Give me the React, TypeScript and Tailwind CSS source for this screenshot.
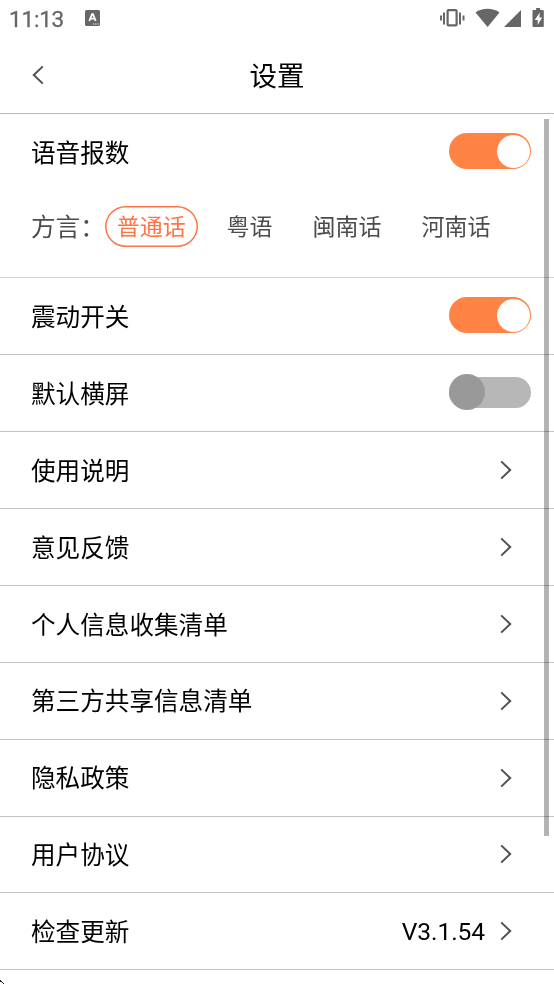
const rows = [
    "使用说明",
    "意见反馈",
    "个人信息收集清单",
    "第三方共享信息清单",
    "隐私政策",
    "用户协议",
]

const dialects = [
    { name: "粤语", className: "ml-[28.5px]" },
    { name: "闽南话", className: "ml-[40px]" },
    { name: "河南话", className: "ml-[40px]" },
]

function StatusBar () {
    return (
        <div className="flex h-[38px] items-center pb-[2px] text-[#666666]">
            <span className="ml-[9px] w-[76px] pt-[3px] font-[Roboto] text-[22.5px] leading-none tracking-[-0.2px] [-webkit-text-stroke:0.3px_#666666]">11:13</span>
            <svg width="15" height="16" viewBox="0 0 15 16">
                <rect width="15" height="16" rx="1.5" fill="#666666" />
                <path d="M4.3 11 7 4.2h1L10.7 11M5.4 8.7h4.2" fill="none" stroke="#fff" strokeWidth="1.8" />
                <path d="M8 14h1.2M10.2 14h1.2M12.4 14h1.2" stroke="#fff" strokeWidth="1" />
            </svg>
            <svg width="106" height="22" viewBox="0 0 106 22" className="ml-auto mr-[9.5px]" fill="#666666">
                <path d="M1 8.5h2v5H1zM4 5.5h2v12H4zM20 5.5h2v12h-2zM23.5 8.5h2v5h-2z" />
                <rect x="8.6" y="3.1" width="9" height="15.3" rx="1" fill="none" stroke="#666666" strokeWidth="2.2" />
                <path d="M36.5 5.4C43 .4 54 .4 60.5 5.4L48.6 20z" />
                <path d="M65 20 82 3v17z" />
                <path d="M94.5 3h2.6V1h4V3h2.7q1 0 1 1v15q0 1-1 1h-9.3q-1 0-1-1V4q0-1 1-1z" />
                <path d="M100.8 5.5 95.7 13h3v5l4.4-7.5h-2.7z" fill="#fff" />
            </svg>
        </div>
    )
}

function Switch ({ on }: { on: boolean }) {
    if (on) {
        return (
            <div className="flex h-[36px] w-[82px] items-center justify-end rounded-full bg-[#ff8345] pr-[1px]">
                <div className="size-[33px] rounded-full bg-white" />
            </div>
        )
    }
    return (
        <div className="flex h-[36px] w-[82px] items-center">
            <div className="flex h-[31px] w-full items-center rounded-full bg-[#b7b7b7]">
                <div className="size-[36px] shrink-0 rounded-full bg-[#999999]" />
            </div>
        </div>
    )
}

function Chevron () {
    return (
        <svg width="12" height="20" viewBox="0 0 12 20" className="mr-[19px]">
            <path d="M1.2 1.4 10.2 10l-9 8.6" fill="none" stroke="#505050" strokeWidth="2" />
        </svg>
    )
}

function Row ({ label, children }: { label: string, children: React.ReactNode }) {
    return (
        <div className="flex h-[76.9px] items-center justify-between border-b border-[#c4c4c4] pl-[31px] pr-[23px]">
            <span className="pb-[2px]">{label}</span>
            {children}
        </div>
    )
}

export default function App () {
    return (
        <div className="relative h-[984px] w-[554px] overflow-hidden bg-white font-['Noto_Sans_CJK_SC',sans-serif] text-[24.6px] leading-none text-black">
            <StatusBar />

            <div className="flex h-[76px] items-center border-b border-[#b5b5b5] pb-[2px]">
                <svg width="12" height="20" viewBox="0 0 12 20" className="ml-[32px]">
                    <path d="M10.8 1.4 1.8 10l9 8.6" fill="none" stroke="#505050" strokeWidth="2" />
                </svg>
                <h1 className="flex-1 pr-[44px] text-center text-[27.5px]">设置</h1>
            </div>

            <div className="h-[164.3px] border-b border-[#d2d2d2]">
                <div className="flex h-[74px] items-center justify-between pl-[31px] pr-[23px]">
                    <span>语音报数</span>
                    <Switch on={true} />
                </div>
                <div className="mt-[18px] flex h-[41px] items-center pl-[31px] text-[23px] text-[#4c4c4c]">
                    <span className="w-[73.5px] whitespace-nowrap pb-[2px] text-[24.6px]">方言：</span>
                    <span className="flex h-[41px] w-[93.5px] items-center justify-center rounded-full pb-[2px] text-[#ff7445] inset-ring-[1.5px] inset-ring-[#ff7445]">普通话</span>
                    {dialects.map((d) => (
                        <span key={d.name} className={`pb-[2px] ${d.className}`}>{d.name}</span>
                    ))}
                </div>
            </div>

            <Row label="震动开关"><div className="pb-[2px]"><Switch on={true} /></div></Row>
            <Row label="默认横屏"><div className="pb-[2px]"><Switch on={false} /></div></Row>
            {rows.map((label) => (
                <Row key={label} label={label}><Chevron /></Row>
            ))}
            <Row label="检查更新">
                <div className="flex items-center gap-[15px]">
                    <span className="pt-[2px] font-[Roboto] tracking-[-0.1px]">V3.1.54</span>
                    <Chevron />
                </div>
            </Row>

            {/* scrollbar */}
            <div className="absolute left-[544px] top-[119px] h-[717px] w-[5px] bg-[#b4b4b4] mix-blend-multiply" />

            {/* tip of the next row's mark */}
            <svg className="absolute left-0 top-[979px]" width="5" height="5" viewBox="0 0 5 5" shapeRendering="crispEdges">
                <path d="M0 1h1v1H0zM1 2h1v1H1zM2 3h1v1H2zM3 4h1v1H3zM0 2h1v1H0z" fill="#222" />
            </svg>
        </div>
    )
}
